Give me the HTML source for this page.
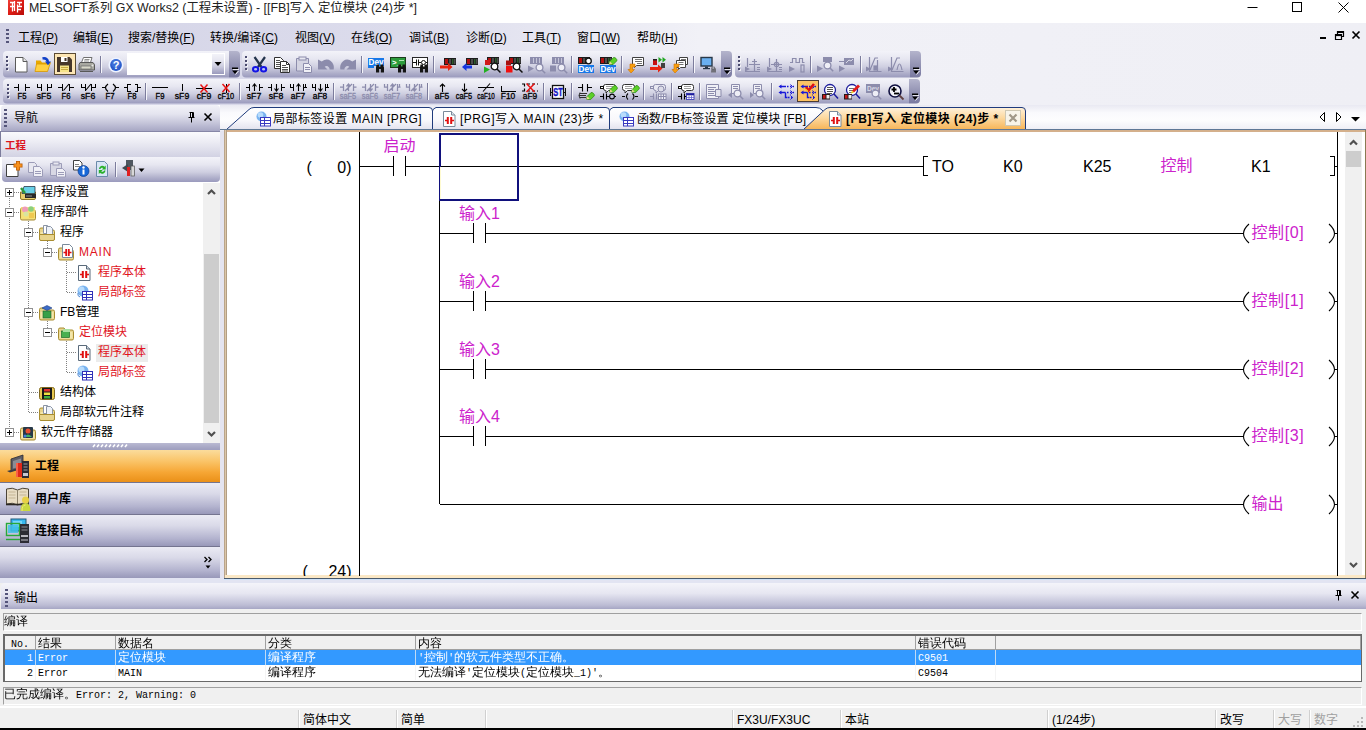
<!DOCTYPE html>
<html lang="zh-CN">
<head>
<meta charset="utf-8">
<title>MELSOFT系列 GX Works2</title>
<style>
*{box-sizing:border-box;margin:0;padding:0}
html,body{width:1366px;height:730px;overflow:hidden;background:#d6d6e8;font-family:"Liberation Sans","Noto Sans CJK SC",sans-serif;font-size:12px;color:#000}
.abs{position:absolute}
#titlebar{position:absolute;left:0;top:0;width:1366px;height:23px;background:#fff}
#titlebar .ttl{position:absolute;left:29px;top:0;height:17px;line-height:17px;font-size:12.400px;color:#222;white-space:nowrap}
#menubar{position:absolute;left:0;top:23px;width:1366px;height:27px;background:linear-gradient(90deg,#d3d3e6 0,#dcdcec 400px,#f1f1f7 700px,#efeff5 1366px)}
#menubar .mi{position:absolute;top:7px;height:16px;line-height:16px;font-size:12px;white-space:nowrap;color:#000}
#menubar .mi u{text-decoration:underline}
.grip{position:absolute;width:3px;background:repeating-linear-gradient(180deg,#55557a 0,#55557a 2px,transparent 2px,transparent 4px)}
#tbarea{position:absolute;left:0;top:50px;width:1366px;height:55px;background:linear-gradient(90deg,#d3d3e6 0,#dcdcec 400px,#f1f1f7 700px,#efeff5 1366px)}
.tb{position:absolute;height:26px;border-radius:4px 0 0 4px;background:linear-gradient(180deg,#ededf5 0,#e2e2ee 35%,#c4c4d8 70%,#a5a5c3 100%)}
.tbend{position:absolute;width:11px;border-radius:0 4px 4px 0;background:linear-gradient(180deg,#b0b0c8 0,#8d8daf 60%,#77779e 100%)}
.sep{position:absolute;width:1px;background:#7f7f9f;box-shadow:1px 0 0 #f4f4fa}

#nav{position:absolute;left:0;top:105px;width:220px;height:473px;background:#fff}
#navhdr{position:absolute;left:1px;top:0;width:219px;height:26px;background:linear-gradient(180deg,#f2f2f8 0,#e4e4ef 35%,#c4c4d9 70%,#a7a7c4 100%);border-radius:4px 4px 0 0}
#navhdr .t{position:absolute;left:13px;top:5px;font-size:12px;line-height:16px}
#navproj{position:absolute;left:0;top:26px;width:220px;height:26px;background:linear-gradient(180deg,#fafafd 0,#ececf4 40%,#d2d2e3 100%);border-top:1px solid #8686a6;border-left:1px solid #7c7c9c}
#navproj .t{position:absolute;left:4px;top:6px;font-size:10.500px;line-height:14px;font-weight:bold;color:#dc141e}
#navtb{position:absolute;left:2px;top:52px;width:218px;height:25px;background:linear-gradient(180deg,#f3f3f9 0,#e7e7f1 30%,#cfcfe1 60%,#adadc9 85%,#9a9abd 100%);border-radius:0 0 4px 4px}
#tree{position:absolute;left:0;top:78px;width:220px;height:260px;background:#fff;overflow:hidden}
.tr{position:absolute;font-size:12px;line-height:16px;white-space:nowrap;color:#000}
.tr.r{color:#e0141e}
.pm{position:absolute;width:9px;height:9px;border:1px solid #919191;background:#fff}
.pm:before{content:"";position:absolute;left:1px;top:3px;width:5px;height:1px;background:#000}
.pm.p:after{content:"";position:absolute;left:3px;top:1px;width:1px;height:5px;background:#000}
.dv{position:absolute;width:1px;background:repeating-linear-gradient(180deg,#808080 0,#808080 1px,transparent 1px,transparent 2px)}
.dh{position:absolute;height:1px;background:repeating-linear-gradient(90deg,#808080 0,#808080 1px,transparent 1px,transparent 2px)}
.nbtn{position:absolute;left:0;width:220px;height:32px;background:linear-gradient(180deg,#ebebf4 0,#d9d9e8 35%,#b4b4cf 75%,#9898b9 100%);border-top:1px solid #74748f}
.nbtn .t{position:absolute;left:35px;top:8px;font-size:12px;line-height:16px;font-weight:bold;color:#000}
.nbtn.sel{height:33px;background:linear-gradient(180deg,#fbdc9c 0,#fac468 35%,#f6a634 70%,#ea9018 100%);border-top:1px solid #a0a0c0}

#tabs{position:absolute;left:220px;top:105px;width:1146px;height:26px;background:linear-gradient(180deg,#e9e9f2 0,#fafafd 30%,#fdfdfe 60%,#ececf4 100%)}
#tabs .tt{position:absolute;top:6px;font-size:12px;line-height:16px;white-space:nowrap;color:#000;letter-spacing:.45px}
#editor{position:absolute;left:224px;top:129px;width:1142px;height:451px;background:#fff}
#out{position:absolute;left:0;top:583px;width:1366px;height:125px;background:#f0f0f0}
#outhdr{position:absolute;left:1px;top:0;width:1365px;height:26px;background:linear-gradient(180deg,#f4f4fa 0,#e6e6f1 40%,#bcbcd4 85%,#a6a6c4 100%);border-radius:4px 0 0 0}
#outhdr .t{position:absolute;left:13px;top:6.500px;font-size:12px;line-height:16px}
.sun{position:absolute;border-top:1px solid #a0a0a0;border-left:1px solid #a0a0a0;border-bottom:1px solid #fff;border-right:1px solid #fff;font-family:"Liberation Mono","WenQuanYi Zen Hei",monospace;font-size:12px;line-height:15px;white-space:pre}
#tbl{position:absolute;left:3px;top:51px;width:1359px;height:48px;border:1px solid #696969;border-top:2px solid #696969;border-left:2px solid #696969;background:#fff;font-family:"Liberation Mono","WenQuanYi Zen Hei",monospace;font-size:12px;line-height:15px}
.l{font-size:10px;letter-spacing:0}
#tbl .row{position:absolute;left:0;width:1356px;height:15px}
#tbl .c{position:absolute;top:0;height:15px;line-height:17px;white-space:pre;overflow:hidden}
#tbl .hd{height:14px}
#tbl .hd .c{height:14px;line-height:16px;border-right:1px solid #a0a0a0;border-bottom:1px solid #a0a0a0;background:#f0f0f0}
#tbl .vs{position:absolute;top:14px;width:1px;height:30px;background:rgba(240,240,240,.75)}
#sb{position:absolute;left:0;top:706px;width:1366px;height:24px;background:#f0f0f0;border-top:2px solid #fff;border-bottom:2px solid #000}
#sb .t{position:absolute;top:5px;font-size:12px;line-height:15px;white-space:nowrap}
#sb .d{position:absolute;top:2px;width:1px;height:18px;background:#d0d0d0;box-shadow:1px 0 0 #fff}
</style>
</head>
<body>
<div id="titlebar">
  <svg class="abs" style="left:8px;top:0" width="16" height="15" viewBox="0 0 16 15"><defs><linearGradient id="ig" x1="0" y1="0" x2="1" y2="1"><stop offset="0" stop-color="#f04038"/><stop offset=".5" stop-color="#dc1c14"/><stop offset="1" stop-color="#b80c08"/></linearGradient></defs><rect width="16" height="15" fill="url(#ig)"/><path d="M2 2.500h5M4.500 2.500v4M2 6.500h4M9 2.500h5M11.500 2.500v3M6.500 1v10M9.500 4.500v8M10 6.500h4M10 9.500h3M4.500 6.500v5" stroke="#fff" stroke-width="1.300" fill="none"/></svg>
  <div class="ttl">MELSOFT系列 GX Works2 (工程未设置) - [[FB]写入 定位模块 (24)步 *]</div>
  <svg class="abs" style="left:1240px;top:0" width="126" height="23" viewBox="0 0 126 23"><path d="M7.500 7.500h10" stroke="#000" stroke-width="1"/><rect x="52.500" y="2.500" width="9" height="9" fill="none" stroke="#000" stroke-width="1"/><path d="M98.500 2.500l10 10M108.500 2.500l-10 10" stroke="#000" stroke-width="1"/></svg>
</div>
<div id="menubar">
  <div class="grip" style="left:6px;top:6px;height:16px"></div>
  <div class="mi" style="left:18px">工程(<u>P</u>)</div>
  <div class="mi" style="left:73px">编辑(<u>E</u>)</div>
  <div class="mi" style="left:128px">搜索/替换(<u>F</u>)</div>
  <div class="mi" style="left:210px">转换/编译(<u>C</u>)</div>
  <div class="mi" style="left:295px">视图(<u>V</u>)</div>
  <div class="mi" style="left:351px">在线(<u>O</u>)</div>
  <div class="mi" style="left:409px">调试(<u>B</u>)</div>
  <div class="mi" style="left:466px">诊断(<u>D</u>)</div>
  <div class="mi" style="left:522px">工具(<u>T</u>)</div>
  <div class="mi" style="left:577px">窗口(<u>W</u>)</div>
  <div class="mi" style="left:637px">帮助(<u>H</u>)</div>
  <svg class="abs" style="left:1316px;top:6px" width="48" height="14" viewBox="0 0 48 14"><rect x="4" y="8" width="6" height="2" fill="#000"/><path d="M21.500 2.500h6v5h-6zM21 3.500h7" stroke="#000" stroke-width="1.200" fill="none"/><path d="M19.500 5.500h6v5h-6z" fill="#f0f0f6" stroke="#000" stroke-width="1.200"/><path d="M19 6.500h7" stroke="#000" stroke-width="1.200"/><path d="M36.500 2.500l7 7M43.500 2.500l-7 7" stroke="#000" stroke-width="1.700"/></svg>
</div>
<div id="tbarea">
<!--TB-->
<svg class="abs" style="left:0;top:0" width="1366" height="55" viewBox="0 50 1366 55" font-family="'Liberation Sans',sans-serif">
<defs><linearGradient id="tb" x1="0" y1="0" x2="0" y2="1"><stop offset="0" stop-color="#f3f3f9"/><stop offset=".3" stop-color="#e7e7f1"/><stop offset=".6" stop-color="#cfcfe1"/><stop offset=".85" stop-color="#adadc9"/><stop offset="1" stop-color="#9a9abd"/></linearGradient><linearGradient id="ec" x1="0" y1="0" x2="0" y2="1"><stop offset="0" stop-color="#b4b4cc"/><stop offset=".5" stop-color="#9494b4"/><stop offset="1" stop-color="#7878a0"/></linearGradient></defs>
<path d="M7 51h222v26.5h-222q-4 0 -4 -4v-18.5q0 -4 4 -4z" fill="url(#tb)"/>
<path d="M229 51h7q4 0 4 4v18.5q0 4 -4 4h-7z" fill="url(#ec)"/><rect x="232" y="67.5" width="6" height="1.500" fill="#000"/><rect x="233" y="69.0" width="6" height="1" fill="#fff" opacity=".8"/><path d="M232 70.5h6l-3 3.500z" fill="#000"/><path d="M238.5 71.0l-3 3.500" stroke="#fff" opacity=".9"/>
<path d="M246 51h475v26.5h-475q-4 0 -4 -4v-18.5q0 -4 4 -4z" fill="url(#tb)"/>
<path d="M721 51h7q4 0 4 4v18.5q0 4 -4 4h-7z" fill="url(#ec)"/><rect x="724" y="67.5" width="6" height="1.500" fill="#000"/><rect x="725" y="69.0" width="6" height="1" fill="#fff" opacity=".8"/><path d="M724 70.5h6l-3 3.500z" fill="#000"/><path d="M730.5 71.0l-3 3.500" stroke="#fff" opacity=".9"/>
<path d="M739 51h171v26.5h-171q-4 0 -4 -4v-18.5q0 -4 4 -4z" fill="url(#tb)"/>
<path d="M910 51h7q4 0 4 4v18.5q0 4 -4 4h-7z" fill="url(#ec)"/><rect x="913" y="67.5" width="6" height="1.500" fill="#000"/><rect x="914" y="69.0" width="6" height="1" fill="#fff" opacity=".8"/><path d="M913 70.5h6l-3 3.500z" fill="#000"/><path d="M919.5 71.0l-3 3.500" stroke="#fff" opacity=".9"/>
<path d="M7 79h902v24.5h-902q-4 0 -4 -4v-16.5q0 -4 4 -4z" fill="url(#tb)"/>
<path d="M909 79h7q4 0 4 4v16.5q0 4 -4 4h-7z" fill="url(#ec)"/><rect x="912" y="93.5" width="6" height="1.500" fill="#000"/><rect x="913" y="95.0" width="6" height="1" fill="#fff" opacity=".8"/><path d="M912 96.5h6l-3 3.500z" fill="#000"/><path d="M918.5 97.0l-3 3.500" stroke="#fff" opacity=".9"/>
<rect x="6" y="56" width="2" height="2" fill="#4a4a6e"/><rect x="7" y="57" width="2" height="2" fill="#fff" opacity=".7"/><rect x="6" y="56" width="2" height="2" fill="#4a4a6e"/><rect x="6" y="60" width="2" height="2" fill="#4a4a6e"/><rect x="7" y="61" width="2" height="2" fill="#fff" opacity=".7"/><rect x="6" y="60" width="2" height="2" fill="#4a4a6e"/><rect x="6" y="64" width="2" height="2" fill="#4a4a6e"/><rect x="7" y="65" width="2" height="2" fill="#fff" opacity=".7"/><rect x="6" y="64" width="2" height="2" fill="#4a4a6e"/><rect x="6" y="68" width="2" height="2" fill="#4a4a6e"/><rect x="7" y="69" width="2" height="2" fill="#fff" opacity=".7"/><rect x="6" y="68" width="2" height="2" fill="#4a4a6e"/>
<rect x="245" y="56" width="2" height="2" fill="#4a4a6e"/><rect x="246" y="57" width="2" height="2" fill="#fff" opacity=".7"/><rect x="245" y="56" width="2" height="2" fill="#4a4a6e"/><rect x="245" y="60" width="2" height="2" fill="#4a4a6e"/><rect x="246" y="61" width="2" height="2" fill="#fff" opacity=".7"/><rect x="245" y="60" width="2" height="2" fill="#4a4a6e"/><rect x="245" y="64" width="2" height="2" fill="#4a4a6e"/><rect x="246" y="65" width="2" height="2" fill="#fff" opacity=".7"/><rect x="245" y="64" width="2" height="2" fill="#4a4a6e"/><rect x="245" y="68" width="2" height="2" fill="#4a4a6e"/><rect x="246" y="69" width="2" height="2" fill="#fff" opacity=".7"/><rect x="245" y="68" width="2" height="2" fill="#4a4a6e"/>
<rect x="738" y="56" width="2" height="2" fill="#4a4a6e"/><rect x="739" y="57" width="2" height="2" fill="#fff" opacity=".7"/><rect x="738" y="56" width="2" height="2" fill="#4a4a6e"/><rect x="738" y="60" width="2" height="2" fill="#4a4a6e"/><rect x="739" y="61" width="2" height="2" fill="#fff" opacity=".7"/><rect x="738" y="60" width="2" height="2" fill="#4a4a6e"/><rect x="738" y="64" width="2" height="2" fill="#4a4a6e"/><rect x="739" y="65" width="2" height="2" fill="#fff" opacity=".7"/><rect x="738" y="64" width="2" height="2" fill="#4a4a6e"/><rect x="738" y="68" width="2" height="2" fill="#4a4a6e"/><rect x="739" y="69" width="2" height="2" fill="#fff" opacity=".7"/><rect x="738" y="68" width="2" height="2" fill="#4a4a6e"/>
<rect x="7" y="84" width="2" height="2" fill="#4a4a6e"/><rect x="8" y="85" width="2" height="2" fill="#fff" opacity=".7"/><rect x="7" y="84" width="2" height="2" fill="#4a4a6e"/><rect x="7" y="88" width="2" height="2" fill="#4a4a6e"/><rect x="8" y="89" width="2" height="2" fill="#fff" opacity=".7"/><rect x="7" y="88" width="2" height="2" fill="#4a4a6e"/><rect x="7" y="92" width="2" height="2" fill="#4a4a6e"/><rect x="8" y="93" width="2" height="2" fill="#fff" opacity=".7"/><rect x="7" y="92" width="2" height="2" fill="#4a4a6e"/><rect x="7" y="96" width="2" height="2" fill="#4a4a6e"/><rect x="8" y="97" width="2" height="2" fill="#fff" opacity=".7"/><rect x="7" y="96" width="2" height="2" fill="#4a4a6e"/>
<rect x="54.500" y="53.500" width="21" height="21" fill="#fde6b4" stroke="#5c4c34"/>
<g transform="translate(15,57)"><path d="M.5 .5h7.500l4 4v10.500h-11.500z" fill="#fff" stroke="#5a5a5a"/><path d="M8 .5v4h4" fill="#e8e8e8" stroke="#5a5a5a"/></g>
<g transform="translate(35,57)"><path d="M1 3.500h4.500l1.500 2h6v3h-12z" fill="#e8a800"/><path d="M0 14.500l1.500-7.500h11l3-1.500l-3 9z" fill="#ffd040" stroke="#d89800" stroke-width=".8"/><path d="M7.500 1.500q4.500-1 5.500 3.500" fill="none" stroke="#1040c8" stroke-width="2.400"/><path d="M10 4.500h6l-3 3.800z" fill="#1040c8"/></g>
<g transform="translate(57,57)"><path d="M0 0h12.500l2.500 2.500v12.500h-15z" fill="#46362a"/><rect x="4" y="0" width="6.500" height="5" fill="#fff"/><rect x="7.500" y="1" width="2" height="3" fill="#46362a"/><rect x="3" y="8.500" width="9" height="6.500" fill="#f6e48a"/><path d="M4 10.500h7M4 12.500h7" stroke="#c8a840"/></g>
<g transform="translate(79,57)"><path d="M4.500 .5h8.500l-1.500 5h-9z" fill="#fff" stroke="#707070"/><path d="M5.500 2.500h5M5 4h5" stroke="#909090"/><path d="M1 5.500h13l1.500 2v5.500h-15.500v-5.500z" fill="#a8a8a0" stroke="#585858"/><rect x="2" y="9" width="10" height="3" fill="#d8d8c8" stroke="#686868" stroke-width=".7"/><path d="M1 14.500h13" stroke="#585858"/><circle cx="13.500" cy="8.500" r="1" fill="#e8e8e8"/></g>
<g transform="translate(108,57)"><circle cx="8" cy="8" r="7.600" fill="#eef3ff"/><circle cx="8" cy="8" r="5.900" fill="#2a5ccc"/><circle cx="8" cy="6.500" r="4.500" fill="#4a7ce0" opacity=".6"/><text x="8" y="12" font-size="11" font-weight="bold" fill="#fff" text-anchor="middle">?</text></g>
<g transform="translate(252,57)"><path d="M2.500 0l7 10M13 0l-7 10" stroke="#24344c" stroke-width="2.200"/><ellipse cx="3.600" cy="12.300" rx="2.600" ry="2.200" fill="#b8c4f8" stroke="#1414e4" stroke-width="2"/><ellipse cx="11.600" cy="12.300" rx="2.600" ry="2.200" fill="#b8c4f8" stroke="#1414e4" stroke-width="2"/></g>
<g transform="translate(274,57)"><path d="M.5 .5h6l3 3v8h-9z" fill="#fff" stroke="#303030"/><path d="M2 3.500h4M2 5.500h5M2 7.500h5M2 9.500h5" stroke="#505050"/><path d="M6.500 4.500h6l3 3v8h-9z" fill="#fff" stroke="#303030"/><path d="M12.500 4.500v3h3" fill="none" stroke="#303030"/><path d="M8 8.500h4M8 10.500h6M8 12.500h6M8 14h6" stroke="#505050"/></g>
<g transform="translate(296,57)"><path d="M.5 1.500h12v12.500h-12z" fill="#d4d4e2" stroke="#8c8cac"/><rect x="3" y="0" width="7" height="3" fill="#e8e8f0" stroke="#8c8cac"/><path d="M7.500 6.500h5l3 3v6h-8z" fill="#f0f0f6" stroke="#8c8cac"/><path d="M9 10.500h5M9 12.500h5" stroke="#8c8cac"/></g>
<g transform="translate(318,57)"><path d="M0 2.500v10h9.500l-2.800-2.800q2.300-1.500 4.300 .8q.8 1 .5 2h4.200q1-5 -3-8.500q-4-3 -9 .5z" fill="#8c8cac"/></g>
<g transform="translate(340,57)"><path d="M16 2.500v10h-9.500l2.800-2.800q-2.300-1.500 -4.300 .8q-.8 1 -.5 2h-4.200q-1-5 3-8.500q4-3 9 .5z" fill="#8c8cac"/></g>
<g transform="translate(368,57)"><rect x="0" y="1" width="16" height="8" fill="#1878e8"/><text x="8" y="8" font-size="9" font-weight="bold" fill="#fff" text-anchor="middle" textLength="15" lengthAdjust="spacingAndGlyphs">Dev</text><rect x="0" y="9" width="6" height="2" fill="#1878e8"/><g transform="translate(7.5,7.5)"><path d="M1 0h2.500v2h1.500v-2h2.500l1 3v5h-3.200v-3.500h-1.600v3.500h-3.200v-5z" fill="#141414"/></g></g>
<g transform="translate(390,57)"><rect x=".5" y=".5" width="15" height="10" fill="#2c9c3c" stroke="#1c3c1c"/><text x="2" y="8" font-size="8" font-weight="bold" fill="#fff">&gt;_</text><path d="M9 3.500h5" stroke="#b0e8b0"/><g transform="translate(7.5,7.5)"><path d="M1 0h2.500v2h1.500v-2h2.500l1 3v5h-3.200v-3.500h-1.600v3.500h-3.200v-5z" fill="#141414"/></g></g>
<g transform="translate(412,57)"><rect x=".5" y=".5" width="15" height="10" fill="#fff" stroke="#282828"/><path d="M1 5.500h3M4.500 2.500v6M6.500 2.500v6M7 5.500h2M14 5.500h1.500" stroke="#101010"/><circle cx="11.500" cy="5.500" r="2" fill="none" stroke="#101010"/><g transform="translate(7.5,7.5)"><path d="M1 0h2.500v2h1.500v-2h2.500l1 3v5h-3.200v-3.500h-1.600v3.500h-3.200v-5z" fill="#141414"/></g></g>
<g transform="translate(440,57)"><g transform="translate(4,1)"><rect x="0" y="0" width="12" height="7" fill="#1c1c1c"/><rect x="1" y="1" width="3" height="5" fill="#b01010"/><rect x="5" y="1" width="2" height="5" fill="#4c4c4c"/><rect x="8" y="1" width="1.500" height="5" fill="#2c5c2c"/><rect x="10" y="1" width="1.500" height="5" fill="#4c4c4c"/></g><path d="M0 8.500h8v-2.500l4.500 4l-4.500 4v-2.500h-8z" fill="#e82410"/></g>
<g transform="translate(462,57)"><g transform="translate(4,1)"><rect x="0" y="0" width="12" height="7" fill="#1c1c1c"/><rect x="1" y="1" width="3" height="5" fill="#b01010"/><rect x="5" y="1" width="2" height="5" fill="#4c4c4c"/><rect x="8" y="1" width="1.500" height="5" fill="#2c5c2c"/><rect x="10" y="1" width="1.500" height="5" fill="#4c4c4c"/></g><path d="M10 8.500h-5.500v-2.500l-4.500 4l4.500 4v-2.500h5.500z" fill="#1434e0"/></g>
<g transform="translate(484,57)"><g transform="translate(3,0)"><rect x="0" y="0" width="12" height="7" fill="#1c1c1c"/><rect x="1" y="1" width="3" height="5" fill="#b01010"/><rect x="5" y="1" width="2" height="5" fill="#4c4c4c"/><rect x="8" y="1" width="1.500" height="5" fill="#2c5c2c"/><rect x="10" y="1" width="1.500" height="5" fill="#4c4c4c"/></g><g transform="translate(1,3)"><rect x="0" y="0" width="5" height="5" fill="#d01818"/></g><path d="M0 9.500l6 3l-6 3.500z" fill="#20b020"/><g transform="translate(6,5)"><circle cx="4.500" cy="4.500" r="3.300" fill="#fff" stroke="#101010" stroke-width="1.300"/><path d="M7 7l3.500 3.500" stroke="#101010" stroke-width="1.500"/></g></g>
<g transform="translate(506,57)"><g transform="translate(3,0)"><rect x="0" y="0" width="12" height="7" fill="#1c1c1c"/><rect x="1" y="1" width="3" height="5" fill="#b01010"/><rect x="5" y="1" width="2" height="5" fill="#4c4c4c"/><rect x="8" y="1" width="1.500" height="5" fill="#2c5c2c"/><rect x="10" y="1" width="1.500" height="5" fill="#4c4c4c"/></g><rect x="0" y="3.500" width="5" height="5" fill="#a81010"/><rect x="0" y="9" width="6.500" height="6.500" fill="#f01010"/><g transform="translate(6,5)"><circle cx="4.500" cy="4.500" r="3.300" fill="#fff" stroke="#101010" stroke-width="1.300"/><path d="M7 7l3.500 3.500" stroke="#101010" stroke-width="1.500"/></g></g>
<g transform="translate(528,57)"><g transform="translate(2,0)"><rect x="0" y="0" width="12" height="7" fill="#8c8cac"/><path d="M3.500 1v5M6.500 1v5M9.500 1v5" stroke="#c4c4d8"/></g><path d="M0 8.500l6 3l-6 3.500z" fill="#8c8cac"/><g transform="translate(7,6)"><circle cx="4.500" cy="4.500" r="3.400" fill="#eeeef6" stroke="#8c8cac" stroke-width="1.300"/><path d="M7.200 7.200l3 3" stroke="#8c8cac" stroke-width="1.500"/></g></g>
<g transform="translate(550,57)"><g transform="translate(2,0)"><rect x="0" y="0" width="12" height="7" fill="#8c8cac"/><path d="M3.500 1v5M6.500 1v5M9.500 1v5" stroke="#c4c4d8"/></g><rect x="0" y="8.500" width="6" height="6" fill="#8c8cac"/><g transform="translate(7,6)"><circle cx="4.500" cy="4.500" r="3.400" fill="#eeeef6" stroke="#8c8cac" stroke-width="1.300"/><path d="M7.200 7.200l3 3" stroke="#8c8cac" stroke-width="1.500"/></g></g>
<g transform="translate(578,57)"><g transform="translate(0,0)"><rect x="0" y="0" width="12" height="7" fill="#1c1c1c"/><rect x="1" y="1" width="3" height="5" fill="#b01010"/><rect x="5" y="1" width="2" height="5" fill="#4c4c4c"/><rect x="8" y="1" width="1.500" height="5" fill="#2c5c2c"/><rect x="10" y="1" width="1.500" height="5" fill="#4c4c4c"/></g><circle cx="10.500" cy="4" r="2.800" fill="#fff" stroke="#101010" stroke-width="1.300"/><rect x="0" y="8" width="16" height="8" fill="#1878e8"/><text x="8" y="15" font-size="9" font-weight="bold" fill="#fff" text-anchor="middle" textLength="15" lengthAdjust="spacingAndGlyphs">Dev</text></g>
<g transform="translate(600,57)"><g transform="translate(0,0)"><rect x="0" y="0" width="12" height="7" fill="#1c1c1c"/><rect x="1" y="1" width="3" height="5" fill="#b01010"/><rect x="5" y="1" width="2" height="5" fill="#4c4c4c"/><rect x="8" y="1" width="1.500" height="5" fill="#2c5c2c"/><rect x="10" y="1" width="1.500" height="5" fill="#4c4c4c"/></g><rect x="0" y="8" width="16" height="8" fill="#1878e8"/><text x="8" y="15" font-size="9" font-weight="bold" fill="#fff" text-anchor="middle" textLength="15" lengthAdjust="spacingAndGlyphs">Dev</text><g transform="translate(8,0)"><g transform="translate(1,1) scale(.82)"><path d="M0 7.500l1-3.500l4.500-4.500q1.500-.5 3 1q1.500 1.500 1 3l-4.500 4.500z" fill="#5cd028" stroke="#2a8410" stroke-width=".9"/><path d="M0 7.500l1-3.500l3 3z" fill="#e8d890"/></g></g></g>
<g transform="translate(628,57)"><g transform="translate(4,0)"><path d="M.5 .5h11v8h-7l-2 2v-2h-2z" fill="#fff" stroke="#404040"/><path d="M3 2.500h7M3 4.500h7M5 6.500h5" stroke="#707070"/></g><path d="M2 7h5v3h-2.500v2.500h2l-3.500 3.500l-3-3.500h2z" fill="#f8a010" stroke="#d07000" stroke-width=".6"/></g>
<g transform="translate(650,57)"><rect x="3" y="3" width="4" height="5" fill="#c81010"/><rect x="3" y="2" width="4" height="1.500" fill="#202020"/><path d="M0 10h8v-2.500l4.500 4l-4.500 4v-2.500h-8z" fill="#e82410"/><rect x="11" y="6" width="4" height="5" fill="#404040"/><path d="M8.500 0l3.500 2.700l-3.500 2.700zM12.500 0l3.500 2.700l-3.500 2.700z" fill="#20a820"/></g>
<g transform="translate(672,57)"><g transform="translate(7,0)"><path d="M.5 .5h8v7h-8z" fill="#fff" stroke="#404040"/><path d="M2 2.500h5M2 4.500h5" stroke="#707070"/></g><g transform="translate(4,3)"><path d="M.5 .5h9v7h-5l-2 2v-2h-2z" fill="#fff" stroke="#404040"/><path d="M2.500 2.500h5M2.500 4.500h5" stroke="#707070"/></g><path d="M2 7h5v3h-2.500v2.500h2l-3.500 3.500l-3-3.500h2z" fill="#f8a010" stroke="#d07000" stroke-width=".6"/></g>
<g transform="translate(700,57)"><rect x="1" y=".5" width="11" height="8.500" fill="#6ab0f0" stroke="#283848" stroke-width="1.400"/><rect x="5" y="9.500" width="3" height="1.500" fill="#283848"/><rect x="3" y="11" width="7" height="1.200" fill="#283848"/><path d="M11.500 10.500h3.500l1 1.500v3.500h-5z" fill="#707078"/><rect x="12" y="10" width="2.500" height="2" fill="#c0c0c8" stroke="#505058" stroke-width=".6"/></g>
<g transform="translate(745,57)"><g stroke="#8c8cac" fill="none" stroke-width="1.200"><path d="M2.500 1v9M0 14.500h15M4 7.500h11M9.500 2v12M7 4.500h5M12 10.500h3M12 12.500h3"/><path d="M0 9.500l5 2.500l-5 2.500z" fill="#8c8cac" stroke="none"/></g></g>
<g transform="translate(767,57)"><g stroke="#8c8cac" fill="none" stroke-width="1.200"><path d="M2.500 1v9M0 14.500h15M4 7.500h11M9.500 2v12M12 10.500h3M12 12.500h3"/><circle cx="9.500" cy="7.500" r="2.200"/><path d="M0 9.500l5 2.500l-5 2.500z" fill="#8c8cac" stroke="none"/></g></g>
<g transform="translate(789,57)"><g stroke="#8c8cac" fill="none" stroke-width="1.200"><path d="M1 5.500h2.500v-4h3.500v4h3.500v-4h3v4h2"/><rect x="12" y="8" width="3" height="7"/><path d="M0 9l6 3l-6 3z" fill="#8c8cac" stroke="none"/></g></g>
<g transform="translate(817,57)"><path d="M6 0h9v5h-9z" fill="#8c8cac"/><path d="M0 8.500l6 3l-6 3.500z" fill="#8c8cac"/><g transform="translate(6,4)"><circle cx="4.500" cy="4.500" r="3.400" fill="#eeeef6" stroke="#8c8cac" stroke-width="1.300"/><path d="M7.200 7.200l3 3" stroke="#8c8cac" stroke-width="1.500"/></g></g>
<g transform="translate(839,57)"><rect x="5" y="1" width="10" height="7" fill="#8c8cac"/><path d="M7 6l3-3l2 1l2-2" stroke="#d8d8e6" fill="none"/><path d="M0 4.500h5" stroke="#8c8cac"/><path d="M0 8.500l6 3l-6 3.500z" fill="#8c8cac"/></g>
<g transform="translate(866,57)"><g stroke="#8c8cac" fill="none" stroke-width="1.200"><path d="M3.500 0v14.500h12M4 13l5-12h3M11.500 3v11"/><rect x="8" y="9" width="2.500" height="4" fill="#8c8cac"/><path d="M0 9.500l5 2.500l-5 2.500z" fill="#8c8cac" stroke="none"/></g></g>
<g transform="translate(888,57)"><g stroke="#8c8cac" fill="none" stroke-width="1.200"><path d="M3.500 0v14.500h12M4 13l5-12h3M9 13q2.500-12 5 0"/><path d="M0 9.500l5 2.500l-5 2.500z" fill="#8c8cac" stroke="none"/></g></g>
<path d="M100.500 56v17" stroke="#7c7c9c"/><path d="M101.500 56v17" stroke="#f6f6fb"/>
<path d="M361.500 56v17" stroke="#7c7c9c"/><path d="M362.500 56v17" stroke="#f6f6fb"/>
<path d="M433.500 56v17" stroke="#7c7c9c"/><path d="M434.500 56v17" stroke="#f6f6fb"/>
<path d="M571.500 56v17" stroke="#7c7c9c"/><path d="M572.500 56v17" stroke="#f6f6fb"/>
<path d="M621.500 56v17" stroke="#7c7c9c"/><path d="M622.500 56v17" stroke="#f6f6fb"/>
<path d="M693.500 56v17" stroke="#7c7c9c"/><path d="M694.500 56v17" stroke="#f6f6fb"/>
<path d="M810.500 56v17" stroke="#7c7c9c"/><path d="M811.500 56v17" stroke="#f6f6fb"/>
<path d="M860.500 56v17" stroke="#7c7c9c"/><path d="M861.500 56v17" stroke="#f6f6fb"/>
<rect x="127" y="53" width="98" height="22" fill="#fff"/><rect x="212" y="54" width="12" height="20" fill="url(#tb)"/><path d="M214.500 62h7l-3.500 4z" fill="#000"/>
<rect x="797.500" y="80.500" width="21" height="21" fill="#fcc264" stroke="#4c3c34"/>
<g transform="translate(14,83.5)"><g stroke="#000" stroke-width="1.1" fill="none"><path d="M0 3.500h4.500M4.500 .5v7M11.500 .5v7M11.500 3.500h4.500" shape-rendering="crispEdges" stroke-width="1"/></g><text x="8" y="15.500" font-size="8.500" fill="#000" stroke="#000" stroke-width=".3" text-anchor="middle" textLength="9" lengthAdjust="spacingAndGlyphs">F5</text></g>
<g transform="translate(36,83.5)"><g stroke="#000" stroke-width="1.1" fill="none"><path d="M1.500 .5v3h4M5.500 .5v7M11.500 .5v7M11.500 3.500h4M15.500 .5v3" shape-rendering="crispEdges" stroke-width="1"/></g><text x="8" y="15.500" font-size="8.500" fill="#000" stroke="#000" stroke-width=".3" text-anchor="middle" textLength="14.5" lengthAdjust="spacingAndGlyphs">sF5</text></g>
<g transform="translate(58,83.5)"><g stroke="#000" stroke-width="1.1" fill="none"><path d="M0 3.500h4.500M4.500 .5v7M11.500 .5v7M11.500 3.500h4.500" shape-rendering="crispEdges" stroke-width="1"/><path d="M5.500 7l5.500-6.500"/></g><text x="8" y="15.500" font-size="8.500" fill="#000" stroke="#000" stroke-width=".3" text-anchor="middle" textLength="9" lengthAdjust="spacingAndGlyphs">F6</text></g>
<g transform="translate(80,83.5)"><g stroke="#000" stroke-width="1.1" fill="none"><path d="M1.500 .5v3h4M5.500 .5v7M11.500 .5v7M11.500 3.500h4M15.500 .5v3" shape-rendering="crispEdges" stroke-width="1"/><path d="M5.500 7l5.500-6.500"/></g><text x="8" y="15.500" font-size="8.500" fill="#000" stroke="#000" stroke-width=".3" text-anchor="middle" textLength="14.5" lengthAdjust="spacingAndGlyphs">sF6</text></g>
<g transform="translate(102,83.5)"><g stroke="#000" stroke-width="1.2" fill="none"><path d="M0 4h3.500M13.500 4h3" shape-rendering="crispEdges" stroke-width="1"/><path d="M6 .5q-5 3.750 0 7.500M11 .5q5 3.750 0 7.500"/></g><text x="8" y="15.500" font-size="8.500" fill="#000" stroke="#000" stroke-width=".3" text-anchor="middle" textLength="9" lengthAdjust="spacingAndGlyphs">F7</text></g>
<g transform="translate(124,83.5)"><g stroke="#000" stroke-width="1.1" fill="none"><path d="M0 4h3.500M6.500 .5h-3v7h3M10.500 .5h3v7h-3M13.500 4h3" shape-rendering="crispEdges" stroke-width="1"/></g><text x="8" y="15.500" font-size="8.500" fill="#000" stroke="#000" stroke-width=".3" text-anchor="middle" textLength="9" lengthAdjust="spacingAndGlyphs">F8</text></g>
<g transform="translate(152,83.5)"><g stroke="#000" stroke-width="1.1" fill="none"><path d="M0 3.500h16" shape-rendering="crispEdges" stroke-width="1"/></g><text x="8" y="15.500" font-size="8.500" fill="#000" stroke="#000" stroke-width=".3" text-anchor="middle" textLength="9" lengthAdjust="spacingAndGlyphs">F9</text></g>
<g transform="translate(174,83.5)"><g stroke="#000" stroke-width="1.1" fill="none"><path d="M8.500 0v7" shape-rendering="crispEdges" stroke-width="1"/></g><text x="8" y="15.500" font-size="8.500" fill="#000" stroke="#000" stroke-width=".3" text-anchor="middle" textLength="14.5" lengthAdjust="spacingAndGlyphs">sF9</text></g>
<g transform="translate(196,83.5)"><g stroke="#000" stroke-width="1.1" fill="none"><path d="M0 5h16" shape-rendering="crispEdges" stroke-width="1"/></g><g stroke="#e81414" stroke-width="1.5" fill="none"><path d="M4.500 1l7 8M11.500 1l-7 8"/></g><text x="8" y="15.500" font-size="8.500" fill="#000" stroke="#000" stroke-width=".3" text-anchor="middle" textLength="14.5" lengthAdjust="spacingAndGlyphs">cF9</text></g>
<g transform="translate(218,83.5)"><g stroke="#000" stroke-width="1.1" fill="none"><path d="M8.500 0v9" shape-rendering="crispEdges" stroke-width="1"/></g><g stroke="#e81414" stroke-width="1.5" fill="none"><path d="M4.500 .5l7 8M11.500 .5l-7 8"/></g><text x="8" y="15.500" font-size="8.500" fill="#000" stroke="#000" stroke-width=".3" text-anchor="middle" textLength="16.5" lengthAdjust="spacingAndGlyphs">cF10</text></g>
<g transform="translate(246,83.5)"><g stroke="#000" stroke-width="1.1" fill="none"><path d="M0 3.500h3.500M3.500 .5v7M13.500 .5v7M13.500 3.500h3" shape-rendering="crispEdges" stroke-width="1"/><path d="M8.500 .5v7M6.500 3l2-2.500l2 2.500"/></g><text x="8" y="15.500" font-size="8.500" fill="#000" stroke="#000" stroke-width=".3" text-anchor="middle" textLength="14.5" lengthAdjust="spacingAndGlyphs">sF7</text></g>
<g transform="translate(268,83.5)"><g stroke="#000" stroke-width="1.1" fill="none"><path d="M0 3.500h3.500M3.500 .5v7M13.500 .5v7M13.500 3.500h3" shape-rendering="crispEdges" stroke-width="1"/><path d="M8.500 .5v7M6.500 5l2 2.500l2-2.500"/></g><text x="8" y="15.500" font-size="8.500" fill="#000" stroke="#000" stroke-width=".3" text-anchor="middle" textLength="14.5" lengthAdjust="spacingAndGlyphs">sF8</text></g>
<g transform="translate(290,83.5)"><g stroke="#000" stroke-width="1.1" fill="none"><path d="M.5 .5v3h3M3.500 .5v7M13.500 .5v7M13.500 3.500h3M15.500 .5v3" shape-rendering="crispEdges" stroke-width="1"/><path d="M8.500 .5v7M6.500 3l2-2.500l2 2.500"/></g><text x="8" y="15.500" font-size="8.500" fill="#000" stroke="#000" stroke-width=".3" text-anchor="middle" textLength="14.5" lengthAdjust="spacingAndGlyphs">aF7</text></g>
<g transform="translate(312,83.5)"><g stroke="#000" stroke-width="1.1" fill="none"><path d="M.5 .5v3h3M3.500 .5v7M13.500 .5v7M13.500 3.500h3M15.500 .5v3" shape-rendering="crispEdges" stroke-width="1"/><path d="M8.500 .5v7M6.500 5l2 2.500l2-2.500"/></g><text x="8" y="15.500" font-size="8.500" fill="#000" stroke="#000" stroke-width=".3" text-anchor="middle" textLength="14.5" lengthAdjust="spacingAndGlyphs">aF8</text></g>
<g transform="translate(340,83.5)"><g stroke="#8c8cac" stroke-width="1.25" fill="none"><path d="M0 3.500h3.500M3.500 .5v7M13.500 .5v7M13.500 3.500h3M8.500 .5v7M6.500 3l2-2.500l2 2.500M5 7.500l7-7"/></g><text x="8" y="15.500" font-size="8.500" fill="#8c8cac" stroke="#8c8cac" stroke-width=".3" text-anchor="middle" textLength="16.5" lengthAdjust="spacingAndGlyphs">saF5</text></g>
<g transform="translate(362,83.5)"><g stroke="#8c8cac" stroke-width="1.25" fill="none"><path d="M0 3.500h3.500M3.500 .5v7M13.500 .5v7M13.500 3.500h3M8.500 .5v7M6.500 5l2 2.500l2-2.500M5 7.500l7-7"/></g><text x="8" y="15.500" font-size="8.500" fill="#8c8cac" stroke="#8c8cac" stroke-width=".3" text-anchor="middle" textLength="16.5" lengthAdjust="spacingAndGlyphs">saF6</text></g>
<g transform="translate(384,83.5)"><g stroke="#8c8cac" stroke-width="1.25" fill="none"><path d="M.5 .5v3h3M3.500 .5v7M13.500 .5v7M13.500 3.500h3M15.500 .5v3M8.500 .5v7M6.500 3l2-2.500l2 2.500M5 7.500l7-7"/></g><text x="8" y="15.500" font-size="8.500" fill="#8c8cac" stroke="#8c8cac" stroke-width=".3" text-anchor="middle" textLength="16.5" lengthAdjust="spacingAndGlyphs">saF7</text></g>
<g transform="translate(406,83.5)"><g stroke="#8c8cac" stroke-width="1.25" fill="none"><path d="M.5 .5v3h3M3.500 .5v7M13.500 .5v7M13.500 3.500h3M15.500 .5v3M8.500 .5v7M6.500 5l2 2.500l2-2.500M5 7.500l7-7"/></g><text x="8" y="15.500" font-size="8.500" fill="#8c8cac" stroke="#8c8cac" stroke-width=".3" text-anchor="middle" textLength="16.5" lengthAdjust="spacingAndGlyphs">saF8</text></g>
<g transform="translate(434,83.5)"><g stroke="#000" stroke-width="1.1" fill="none"><path d="M8.500 .5v8M6 3l2.500-2.500l2.500 2.500"/></g><text x="8" y="15.500" font-size="8.500" fill="#000" stroke="#000" stroke-width=".3" text-anchor="middle" textLength="14.5" lengthAdjust="spacingAndGlyphs">aF5</text></g>
<g transform="translate(456,83.5)"><g stroke="#000" stroke-width="1.1" fill="none"><path d="M8.500 0v8M6 5.500l2.500 2.500l2.500-2.500"/></g><text x="8" y="15.500" font-size="8.500" fill="#000" stroke="#000" stroke-width=".3" text-anchor="middle" textLength="16.5" lengthAdjust="spacingAndGlyphs">caF5</text></g>
<g transform="translate(478,83.5)"><g stroke="#000" stroke-width="1.1" fill="none"><path d="M0 4h16" shape-rendering="crispEdges" stroke-width="1"/><path d="M5 8l7-8"/></g><text x="8" y="15.500" font-size="8.500" fill="#000" stroke="#000" stroke-width=".3" text-anchor="middle" textLength="17.5" lengthAdjust="spacingAndGlyphs">caF10</text></g>
<g transform="translate(500,83.5)"><g stroke="#000" stroke-width="1.1" fill="none"><path d="M1.500 2v5.500h14" shape-rendering="crispEdges" stroke-width="1"/></g><text x="8" y="15.500" font-size="8.500" fill="#000" stroke="#000" stroke-width=".3" text-anchor="middle" textLength="14.5" lengthAdjust="spacingAndGlyphs">F10</text></g>
<g transform="translate(522,83.5)"><g stroke="#000" stroke-width="1.2" fill="none"><path d="M0 .5h16M0 7.500h16M2.500 0v8" stroke-dasharray="3 2"/></g><g stroke="#e81414" stroke-width="1.5" fill="none"><path d="M4.500 0l8 8.500M12.500 0l-8 8.500"/></g><text x="8" y="15.500" font-size="8.500" fill="#000" stroke="#000" stroke-width=".3" text-anchor="middle" textLength="14.5" lengthAdjust="spacingAndGlyphs">aF9</text></g>
<g transform="translate(550,84)"><path d="M.5 4v8M15.500 4v8M.5 8.500h2M13.500 8.500h2" stroke="#101010" fill="none"/><rect x="2.500" y="1.500" width="11" height="13" fill="#fff" stroke="#101010" stroke-width="1.300"/><text x="8" y="12" font-size="10" font-weight="bold" fill="#1414c4" stroke="#1414c4" stroke-width=".4" text-anchor="middle" textLength="9.500" lengthAdjust="spacingAndGlyphs">ST</text></g>
<g transform="translate(578,84)"><g stroke="#000" stroke-width="1.1" fill="none"><path d="M0 3.500h4M4.500 0v7.500M9.500 0v7.500M10 3.500h4"/></g><path d="M2 9.500h7M1 11.500h7M2 13.500h6" stroke="#303030"/><path d="M2 8.500q-2 3 0 6" stroke="#303030" fill="none"/><g transform="translate(7.5,8)"><g transform="translate(1,1) scale(.82)"><path d="M0 7.500l1-3.500l4.500-4.500q1.500-.5 3 1q1.500 1.500 1 3l-4.500 4.500z" fill="#5cd028" stroke="#2a8410" stroke-width=".9"/><path d="M0 7.500l1-3.500l3 3z" fill="#e8d890"/></g></g></g>
<g transform="translate(600,84)"><g transform="translate(3,0)"><path d="M2.500 .5h8q2 0 2 2v2q0 2 -2 2h-5l-2.500 2.500v-2.500h-.5q-2 0 -2 -2v-2q0 -2 2 -2z" fill="#fff" stroke="#303030"/><path d="M3 2.500h7M3 4.500h7" stroke="#a0a0a0"/></g><rect x=".5" y="2.500" width="3" height="2" fill="#fff" stroke="#101010"/><g stroke="#000" stroke-width="1.1" fill="none"><path d="M0 12.500h3M3.500 9.500v6M6.500 9.500v6M7 12.500h2.500M14.500 12.500h1.500"/><circle cx="12" cy="12.500" r="2.400"/></g><g transform="translate(8.5,1)"><g transform="translate(1,1) scale(.82)"><path d="M0 7.500l1-3.500l4.500-4.500q1.500-.5 3 1q1.500 1.500 1 3l-4.500 4.500z" fill="#5cd028" stroke="#2a8410" stroke-width=".9"/><path d="M0 7.500l1-3.500l3 3z" fill="#e8d890"/></g></g></g>
<g transform="translate(622,84)"><g transform="translate(0,0)"><path d="M2.500 .5h8q2 0 2 2v2q0 2 -2 2h-5l-2.500 2.500v-2.500h-.5q-2 0 -2 -2v-2q0 -2 2 -2z" fill="#fff" stroke="#303030"/><path d="M3 2.500h7M3 4.500h7" stroke="#a0a0a0"/></g><g stroke="#000" stroke-width="1.1" fill="none"><path d="M0 12.500h3M6 9.500q-3 3 0 6M10.500 9.500q3 3 0 6M13 12.500h3"/></g><g transform="translate(8.5,1)"><g transform="translate(1,1) scale(.82)"><path d="M0 7.500l1-3.500l4.500-4.500q1.500-.5 3 1q1.500 1.500 1 3l-4.500 4.500z" fill="#5cd028" stroke="#2a8410" stroke-width=".9"/><path d="M0 7.500l1-3.500l3 3z" fill="#e8d890"/></g></g></g>
<g transform="translate(650,84)"><g transform="translate(3,0)"><path d="M2.500 .5h8q2 0 2 2v2q0 2 -2 2h-5l-2.500 2.500v-2.500h-.5q-2 0 -2 -2v-2q0 -2 2 -2z" fill="#e8e8f2" stroke="#8c8cac"/></g><rect x=".5" y="2.500" width="3" height="2" fill="#e8e8f2" stroke="#8c8cac"/><g stroke="#8c8cac" stroke-width="1.1" fill="none"><path d="M0 12.500h3M3.500 9.500v6M6.500 9.500v6"/></g><rect x="8.500" y="10" width="7.500" height="5.500" fill="#f0f0f8" stroke="#8c8cac"/><path d="M8.500 12.500h7.500M11 10v5.500M13.500 10v5.500" stroke="#8c8cac"/><circle cx="11" cy="5" r="3" fill="#dcdce8" stroke="#8c8cac"/></g>
<g transform="translate(678,84)"><g transform="translate(3,0)"><path d="M2.500 .5h8q2 0 2 2v2q0 2 -2 2h-5l-2.500 2.500v-2.500h-.5q-2 0 -2 -2v-2q0 -2 2 -2z" fill="#fff" stroke="#303030"/><path d="M3 2.500h7M3 4.500h7" stroke="#a0a0a0"/></g><rect x=".5" y="2.500" width="3" height="2" fill="#fff" stroke="#101010"/><g stroke="#000" stroke-width="1.1" fill="none"><path d="M0 12.500h3M3.500 9.500v6M6.500 9.500v6M7 12.500h1.500"/></g><rect x="8.500" y="9.500" width="7.500" height="6" fill="#fff" stroke="#2c2cb0" stroke-width=".8"/><rect x="8.500" y="9.500" width="7.500" height="1.800" fill="#1c1c9c"/><path d="M8.500 13.500h7.500M11 11.500v4M13.500 11.500v4" stroke="#5858c8" stroke-width=".7"/></g>
<g transform="translate(706,84)"><path d="M.5 .5h12v14h-12z" fill="#f0f0f6" stroke="#8c8cac"/><path d="M2 3.500h8M2 5.500h6M2 7.500h8M2 9.500h6M2 11.500h8" stroke="#8c8cac"/><path d="M9.500 5.500h5.500v7h-5.500z" fill="#e4e4ee" stroke="#8c8cac"/></g>
<g transform="translate(728,84)"><path d="M3.500 .5h8v9h-8z" fill="#f0f0f6" stroke="#8c8cac"/><path d="M5 2.500h5M5 4.500h5" stroke="#8c8cac"/><path d="M0 11l4-3v6z" fill="#8c8cac"/><g transform="translate(5,5)"><circle cx="4.500" cy="4.500" r="3.400" fill="#eeeef6" stroke="#8c8cac" stroke-width="1.300"/><path d="M7.200 7.200l3 3" stroke="#8c8cac" stroke-width="1.500"/></g></g>
<g transform="translate(750,84)"><path d="M3.500 .5h8v9h-8z" fill="#f0f0f6" stroke="#8c8cac"/><path d="M5 2.500h5M5 4.500h5" stroke="#8c8cac"/><path d="M0 8l4 3l-4 3z" fill="#8c8cac"/><g transform="translate(5,5)"><circle cx="4.500" cy="4.500" r="3.400" fill="#eeeef6" stroke="#8c8cac" stroke-width="1.300"/><path d="M7.200 7.200l3 3" stroke="#8c8cac" stroke-width="1.500"/></g></g>
<g transform="translate(778,84)"><g stroke="#1818d8" stroke-width="1.1" fill="none"><path d="M2 2.500h6M2 8.500h5.500M7.500 8.500v5h2" stroke-width="1.400"/><path d="M3.500 .5l-3 2l3 2zM3.500 6.500l-3 2l3 2z" fill="#1818d8" stroke="none"/><path d="M9 2.500h7M9 8.500h7M10 13.500h6" stroke-dasharray="1.500 1.500" stroke-width="1.400"/><path d="M12.500 .5l2 2l-2 2M12.500 6.500l2 2l-2 2M12.500 11.500l2 2l-2 2" stroke-width="1"/></g></g>
<g transform="translate(800,84)"><g stroke="#1818d8" stroke-width="1.1" fill="none"><path d="M2 2.500h6M2 8.500h5.500M7.500 8.500v5h2" stroke-width="1.400"/><path d="M3.500 .5l-3 2l3 2zM3.500 6.500l-3 2l3 2z" fill="#1818d8" stroke="none"/><path d="M9 2.500h7M9 8.500h7M10 13.500h6" stroke-dasharray="1.500 1.500" stroke-width="1.400"/><path d="M12.500 .5l2 2l-2 2M12.500 6.500l2 2l-2 2M12.500 11.500l2 2l-2 2" stroke-width="1"/></g><path d="M6 3l2.500 3.500l5.500-6.500" stroke="#e01010" stroke-width="2.600" fill="none"/><path d="M5.500 5l2.500 2.500" stroke="#f8d020" stroke-width="1.200"/></g>
<g transform="translate(822,84)"><circle cx="8" cy="6" r="5.500" fill="#fff" stroke="#1c1c9c" stroke-width="1.300"/><path d="M5 3.500h6M5 5.500h6M5 7.500h6M5 9.500h5" stroke="#505050"/><path d="M12 10l4 4.500" stroke="#1c1c9c" stroke-width="1.500"/><rect x="0" y="10" width="8" height="5.500" fill="#281818"/><rect x="1" y="11" width="2.500" height="3.500" fill="#c81818"/><rect x="4.500" y="11" width="3" height="3.500" fill="#f0f0f0"/></g>
<g transform="translate(844,84)"><circle cx="8" cy="6" r="5.500" fill="#fff" stroke="#1c1c9c" stroke-width="1.300"/><path d="M5 4.500h5M5 6.500h5M5 8.500h4" stroke="#707070"/><path d="M12 10l4 4.500" stroke="#1c1c9c" stroke-width="1.500"/><rect x="0" y="10" width="8" height="5.500" fill="#281818"/><rect x="1" y="11" width="2.500" height="3.500" fill="#c81818"/><rect x="4.500" y="11" width="3" height="3.500" fill="#f0f0f0"/><path d="M8 6.500l6-6l2 2l-6 6z" fill="#e01818"/><path d="M8 6.500l-1 3l3-1z" fill="#f0d020"/></g>
<g transform="translate(866,84)"><rect x="0" y="0" width="14" height="9" fill="#8c8cac"/><text x="7" y="7" font-size="8" font-weight="bold" fill="#d8d8e6" text-anchor="middle" textLength="12" lengthAdjust="spacingAndGlyphs">Dev</text><g transform="translate(5,5)"><circle cx="4.500" cy="4.500" r="3.400" fill="#eeeef6" stroke="#8c8cac" stroke-width="1.300"/><path d="M7.200 7.200l3 3" stroke="#8c8cac" stroke-width="1.500"/></g></g>
<g transform="translate(888,84)"><circle cx="7" cy="7" r="6" fill="#f4f4fa" stroke="#101040" stroke-width="1.600"/><path d="M3.500 5.500h5M6 3v5" stroke="#000" stroke-width="1.800"/><path d="M6 9.500h5" stroke="#000" stroke-width="1.800"/><path d="M11.500 11.500l4 4" stroke="#604040" stroke-width="1.800"/></g>
<path d="M145.500 83v17" stroke="#7c7c9c"/><path d="M146.500 83v17" stroke="#f6f6fb"/>
<path d="M239.500 83v17" stroke="#7c7c9c"/><path d="M240.500 83v17" stroke="#f6f6fb"/>
<path d="M333.500 83v17" stroke="#7c7c9c"/><path d="M334.500 83v17" stroke="#f6f6fb"/>
<path d="M427.500 83v17" stroke="#7c7c9c"/><path d="M428.500 83v17" stroke="#f6f6fb"/>
<path d="M543.500 83v17" stroke="#7c7c9c"/><path d="M544.500 83v17" stroke="#f6f6fb"/>
<path d="M571.500 83v17" stroke="#7c7c9c"/><path d="M572.500 83v17" stroke="#f6f6fb"/>
<path d="M643.500 83v17" stroke="#7c7c9c"/><path d="M644.500 83v17" stroke="#f6f6fb"/>
<path d="M671.500 83v17" stroke="#7c7c9c"/><path d="M672.500 83v17" stroke="#f6f6fb"/>
<path d="M699.500 83v17" stroke="#7c7c9c"/><path d="M700.500 83v17" stroke="#f6f6fb"/>
<path d="M771.500 83v17" stroke="#7c7c9c"/><path d="M772.500 83v17" stroke="#f6f6fb"/>
</svg>
<!--/TB-->
</div>
<div class="abs" style="left:220px;top:105px;width:5px;height:478px;background:#e4e4f0"></div>
<div class="abs" style="left:0;top:578px;width:1366px;height:5px;background:#e2e4f2"></div>
<div id="nav">
  <div id="navhdr"><div class="grip" style="left:3px;top:4px;height:18px"></div><div class="t">导航</div>
    <svg class="abs" style="left:185px;top:6px" width="30" height="14" viewBox="0 0 30 14"><path d="M3.500 1.500h4M4.500 1.500v5M7.500 1.500v5M6.500 1.500v5M2.500 6.500h6M5.500 6.500v5" stroke="#000" stroke-width="1" fill="none"/><path d="M18.500 2.500l7 7M25.500 2.500l-7 7" stroke="#000" stroke-width="1.600"/></svg>
  </div>
  <div id="navproj"><div class="t">工程</div></div>
  <!--NAV-->
<div id="navtb"><svg class="abs" style="left:-2px;top:0" width="220" height="25" viewBox="0 157 220 25">
<g transform="translate(6,161)"><path d="M.5 3.500h11.500v12h-11.500z" fill="#fff" stroke="#404040"/><path d="M12 0v9.500M7.500 4.500h9" stroke="#b85c08" stroke-width="4"/><path d="M12 .8v8M8.300 4.500h7.400" stroke="#f8901c" stroke-width="2.600"/></g>
<g transform="translate(28,162)"><path d="M.5 .5h6l2 2v8h-8z" fill="#e8e8f0" stroke="#9c9cb8"/><path d="M5.500 4.500h6l3 3v7h-9z" fill="#f0f0f6" stroke="#9c9cb8"/><path d="M7 9.500h6M7 11.500h6" stroke="#9c9cb8"/></g>
<g transform="translate(50,162)"><path d="M.5 1.500h11v12h-11z" fill="#d8d8e4" stroke="#9c9cb8"/><rect x="3" y="0" width="6" height="3" fill="#e8e8f0" stroke="#9c9cb8"/><path d="M6.500 6.500h6l3 3v5.500h-9z" fill="#f0f0f6" stroke="#9c9cb8"/><path d="M8 10.500h6M8 12.500h6" stroke="#9c9cb8"/></g>
<g transform="translate(73,160)"><path d="M.5 .5h6l2.500 2.500v7h-8.500z" fill="#fff" stroke="#404040"/><path d="M2 4.500h4M2 6.500h5" stroke="#808080"/><circle cx="10.500" cy="11" r="5.500" fill="#1868d8"/><circle cx="10.500" cy="11" r="5.500" fill="none" stroke="#0c3c90" stroke-width=".7"/><rect x="9.500" y="9.500" width="2" height="5" fill="#fff"/><circle cx="10.500" cy="7.500" r="1.200" fill="#fff"/></g>
<g transform="translate(96,161)"><path d="M.5 .5h8l3 3v12h-11z" fill="#d8e6f6" stroke="#6a8aaa"/><path d="M3 8a3.200 3.200 0 0 1 5.500-2.200l1.200-1.200v3.800h-3.800l1.300-1.300a1.800 1.800 0 0 0 -2.800 .9zM9.500 9.500a3.200 3.200 0 0 1 -5.500 2.200l-1.200 1.200v-3.800h3.800l-1.300 1.300a1.800 1.800 0 0 0 2.800 -.9z" fill="#28b028"/></g>
<path d="M115.500 162v15" stroke="#7c7c9c"/><path d="M116.500 162v15" stroke="#f6f6fb"/>
<g transform="translate(122,160)"><path d="M4 0h7v10h-7z" fill="#505860"/><path d="M0 8l6-4v8z" fill="#404850"/><rect x="5" y="7" width="3" height="9" fill="#e02020"/><rect x="9" y="6" width="3.500" height="10" fill="#d8d8d8" stroke="#505050" stroke-width=".7"/><path d="M16.500 8.500h6l-3 3.500z" fill="#000"/></g>
</svg></div>
<div id="tree">
<div class="dv" style="left:9px;top:15px;height:230px"></div>
<div class="dv" style="left:28px;top:38px;height:192px"></div>
<div class="dv" style="left:47px;top:58px;height:8px"></div>
<div class="dv" style="left:47px;top:138px;height:8px"></div>
<div class="dv" style="left:66px;top:78px;height:32px"></div>
<div class="dv" style="left:66px;top:158px;height:32px"></div>
<div class="abs" style="left:96px;top:161px;width:52px;height:18px;background:#ececec"></div>
<div class="dh" style="left:14px;top:9px;width:6px"></div>
<div class="pm p" style="left:5px;top:5px"></div>
<div class="tr" style="left:41px;top:1px">程序设置</div>
<div class="dh" style="left:14px;top:29px;width:6px"></div>
<div class="pm" style="left:5px;top:25px"></div>
<div class="tr" style="left:41px;top:21px">程序部件</div>
<div class="dh" style="left:33px;top:49px;width:6px"></div>
<div class="pm" style="left:24px;top:45px"></div>
<div class="tr" style="left:60px;top:41px">程序</div>
<div class="dh" style="left:52px;top:69px;width:6px"></div>
<div class="pm" style="left:43px;top:65px"></div>
<div class="tr r" style="left:79px;top:61px;letter-spacing:.8px">MAIN</div>
<div class="dh" style="left:67px;top:89px;width:10px"></div>
<div class="tr r" style="left:98px;top:81px">程序本体</div>
<div class="dh" style="left:67px;top:109px;width:10px"></div>
<div class="tr r" style="left:98px;top:101px">局部标签</div>
<div class="dh" style="left:33px;top:129px;width:6px"></div>
<div class="pm" style="left:24px;top:125px"></div>
<div class="tr" style="left:60px;top:121px">FB管理</div>
<div class="dh" style="left:52px;top:149px;width:6px"></div>
<div class="pm" style="left:43px;top:145px"></div>
<div class="tr r" style="left:79px;top:141px">定位模块</div>
<div class="dh" style="left:67px;top:169px;width:10px"></div>
<div class="tr r" style="left:98px;top:161px">程序本体</div>
<div class="dh" style="left:67px;top:189px;width:10px"></div>
<div class="tr r" style="left:98px;top:181px">局部标签</div>
<div class="dh" style="left:29px;top:209px;width:10px"></div>
<div class="tr" style="left:60px;top:201px">结构体</div>
<div class="dh" style="left:29px;top:229px;width:10px"></div>
<div class="tr" style="left:60px;top:221px">局部软元件注释</div>
<div class="dh" style="left:14px;top:249px;width:6px"></div>
<div class="pm p" style="left:5px;top:245px"></div>
<div class="tr" style="left:41px;top:241px">软元件存储器</div>
<svg class="abs" style="left:0;top:0" width="200" height="260" viewBox="0 0 200 260"><g transform="translate(20,2)"><path d="M.5 7h15v6q0 1.500 -1.500 1.500h-12q-1.500 0 -1.500 -1.500z" fill="#e8d070" stroke="#907828"/><path d="M4 1.500h11v7h-13z" fill="#68d0e8" stroke="#283848" stroke-width=".8"/><path d="M1 3l4 5" stroke="#2c9c3c" stroke-width="2.400"/><rect x="5" y="9" width="11" height="4" fill="#282828"/><path d="M6 11h6" stroke="#909090"/></g><g transform="translate(20,22)"><path d="M.5 4.500q0-1.500 1.500-1.500h4l1.500 2h6.500q1.500 0 1.500 1.500v7q0 1.500 -1.500 1.500h-12q-1.500 0 -1.500 -1.500z" fill="#e8d48c" stroke="#a88c30"/><path d="M1.500 7h13v6.500h-13z" fill="#f8eeb8" opacity=".7"/><rect x="1" y="2" width="14" height="12" fill="#f4e06c" opacity=".8"/><circle cx="5" cy="4.500" r="3" fill="#f09cb8"/><circle cx="11" cy="4" r="2.800" fill="#8cd07c"/><circle cx="6" cy="9" r="2.500" fill="#d8e4a0"/><rect x="9" y="8" width="5" height="5" fill="#f0c850"/></g><g transform="translate(39,42)"><path d="M.5 4.500q0-1.500 1.500-1.500h4l1.500 2h6.500q1.500 0 1.500 1.500v7q0 1.500 -1.500 1.500h-12q-1.500 0 -1.500 -1.500z" fill="#e8d48c" stroke="#a88c30"/><path d="M1.500 7h13v6.500h-13z" fill="#f8eeb8" opacity=".7"/><path d="M4.500 .5h4l2 2v6h-6z" fill="#fff" stroke="#8a94a4"/><path d="M7.500 1.500h4l2 2v6h-6z" fill="#eef2f8" stroke="#8a94a4"/><path d="M.5 9.500h15v4.500q0 1.500 -1.500 1.500h-12q-1.500 0 -1.500 -1.500z" fill="#e8d48c" stroke="#a88c30"/></g><g transform="translate(58,62)"><path d="M.5 4.500q0-1.500 1.500-1.500h4l1.500 2h6.500q1.500 0 1.500 1.500v7q0 1.500 -1.500 1.500h-12q-1.500 0 -1.500 -1.500z" fill="#e8d48c" stroke="#a88c30"/><path d="M1.500 7h13v6.500h-13z" fill="#f8eeb8" opacity=".7"/><g transform="translate(3,-1)"><path d="M1.500 .5h7l3 3v10h-10z" fill="#fff" stroke="#7a8a9a"/><path d="M2.500 8.500h2.500M8 8.500h2.500" stroke="#e01010" stroke-width="1.400"/><path d="M5.200 5v7M7.800 5v7" stroke="#e01010" stroke-width="1.800"/></g></g><g transform="translate(77,82)"><path d="M1.500 .5h8l3.500 3.500v11.500h-11.500z" fill="#fff" stroke="#5a6a7a"/><path d="M9.500 .5v3.500h3.500" fill="#cdd6e0" stroke="#5a6a7a"/><path d="M3 9.500h2.500M9.500 9.500h2.500" stroke="#e01010" stroke-width="1.400"/><path d="M5.800 6v7M9.200 6v7" stroke="#e01010" stroke-width="2"/></g><g transform="translate(77,102)"><circle cx="6" cy="6" r="5.500" fill="#7ab4f0"/><circle cx="4.500" cy="4.500" r="3" fill="#b8dcfc"/><path d="M1 8q-1 3 2 4" stroke="#4a84d0" fill="none"/><rect x="5.500" y="6.500" width="10" height="8.500" fill="#fff" stroke="#3030b8"/><path d="M5.500 9.500h10M5.500 12.500h10M9.500 6.500v8.500" stroke="#3030b8"/></g><g transform="translate(39,122)"><path d="M.5 4.500q0-1.500 1.500-1.500h4l1.500 2h6.500q1.500 0 1.500 1.500v7q0 1.500 -1.500 1.500h-12q-1.500 0 -1.500 -1.500z" fill="#e8d48c" stroke="#a88c30"/><path d="M1.500 7h13v6.500h-13z" fill="#f8eeb8" opacity=".7"/><path d="M3 3l5-2.500l5 2.500l-5 2.500z" fill="#3c6cc8" stroke="#1c3c80" stroke-width=".6"/><rect x="4" y="6" width="8" height="7" fill="#38a048" stroke="#1c6028" stroke-width=".6"/></g><g transform="translate(58,142)"><path d="M.5 4.500q0-1.500 1.500-1.500h4l1.500 2h6.500q1.500 0 1.500 1.500v7q0 1.500 -1.500 1.500h-12q-1.500 0 -1.500 -1.500z" fill="#e8d48c" stroke="#a88c30"/><path d="M1.500 7h13v6.500h-13z" fill="#f8eeb8" opacity=".7"/><rect x="3.500" y="6" width="8" height="6.500" fill="#48b050" stroke="#1c6c28" stroke-width=".7"/><rect x="5" y="4" width="7" height="3" fill="#a8e0a0"/></g><g transform="translate(77,162)"><path d="M1.500 .5h8l3.500 3.500v11.500h-11.500z" fill="#fff" stroke="#5a6a7a"/><path d="M9.500 .5v3.500h3.500" fill="#cdd6e0" stroke="#5a6a7a"/><path d="M3 9.500h2.500M9.500 9.500h2.500" stroke="#e01010" stroke-width="1.400"/><path d="M5.800 6v7M9.200 6v7" stroke="#e01010" stroke-width="2"/></g><g transform="translate(77,182)"><circle cx="6" cy="6" r="5.500" fill="#7ab4f0"/><circle cx="4.500" cy="4.500" r="3" fill="#b8dcfc"/><path d="M1 8q-1 3 2 4" stroke="#4a84d0" fill="none"/><rect x="5.500" y="6.500" width="10" height="8.500" fill="#fff" stroke="#3030b8"/><path d="M5.500 9.500h10M5.500 12.500h10M9.500 6.500v8.500" stroke="#3030b8"/></g><g transform="translate(39,202)"><rect x=".5" y="2.500" width="15" height="12" rx="2" fill="#e8c850" stroke="#806820"/><rect x="3" y="3" width="10" height="11" fill="#181818"/><rect x="5" y="4" width="6" height="2.500" fill="#e03030"/><rect x="5" y="7.500" width="6" height="2.500" fill="#f0e040"/><rect x="5" y="11" width="6" height="2.500" fill="#40b040"/></g><g transform="translate(39,222)"><path d="M.5 4.500q0-1.500 1.500-1.500h4l1.500 2h6.500q1.500 0 1.500 1.500v7q0 1.500 -1.500 1.500h-12q-1.500 0 -1.500 -1.500z" fill="#e8d48c" stroke="#a88c30"/><path d="M1.500 7h13v6.500h-13z" fill="#f8eeb8" opacity=".7"/><path d="M4.500 .5h4l2 2v6h-6z" fill="#fff" stroke="#8a94a4"/><path d="M7.500 1.500h4l2 2v6h-6z" fill="#eef2f8" stroke="#8a94a4"/><path d="M.5 9.500h15v4.500q0 1.500 -1.500 1.500h-12q-1.500 0 -1.500 -1.500z" fill="#e8d48c" stroke="#a88c30"/></g><g transform="translate(20,242)"><path d="M.5 4.500q0-1.500 1.500-1.500h4l1.500 2h6.500q1.500 0 1.500 1.500v7q0 1.500 -1.500 1.500h-12q-1.500 0 -1.500 -1.500z" fill="#e8d48c" stroke="#a88c30"/><path d="M1.500 7h13v6.500h-13z" fill="#f8eeb8" opacity=".7"/><rect x="3" y="2" width="10" height="11" rx="1" fill="#283848"/><circle cx="8" cy="6" r="2.500" fill="#e85030"/><path d="M4 12q4-5 8 0z" fill="#40b060"/><circle cx="5" cy="11" r="1.500" fill="#4080e0"/></g></svg>
<div class="abs" style="left:203px;top:0;width:17px;height:260px;background:#f0f0f0"></div>
<div class="abs" style="left:204px;top:71px;width:15px;height:169px;background:#cdcdcd"></div>
<svg class="abs" style="left:203px;top:0" width="17" height="260" viewBox="0 0 17 260"><path d="M5 11l3.500-3.500l3.500 3.500M5 249l3.500 3.500l3.500-3.500" stroke="#505050" stroke-width="2.200" fill="none"/></svg>
</div>
<!--/NAV-->
  <div class="abs" style="left:0;top:338px;width:220px;height:7px;background:linear-gradient(180deg,#b9b9d2,#9d9dbd)"></div>
  <svg class="abs" style="left:92px;top:339px" width="36" height="4" viewBox="0 0 36 4"><path d="M1 3l2-2.500M5 3l2-2.500M9 3l2-2.500M13 3l2-2.500M17 3l2-2.500M21 3l2-2.500M25 3l2-2.500M29 3l2-2.500M33 3l2-2.500" stroke="#fff" stroke-width="1.600"/></svg>
  <div class="nbtn sel" style="top:344px"><div class="t">工程</div>
   <svg class="abs" style="left:6px;top:4px" width="26" height="26" viewBox="0 0 26 26"><path d="M5 5l12-4v13l-12 3z" fill="#5c5c64" stroke="#2c2c34" stroke-width=".8"/><path d="M7 7l8-2.500v8l-8 2z" fill="#8c8c94"/><path d="M1 17l8-2l3 1l-8 2.500z" fill="#3c3c44"/><rect x="10" y="9" width="6" height="14" fill="#e02818"/><rect x="10" y="9" width="2" height="14" fill="#f86048"/><rect x="16" y="7" width="7" height="17" fill="#2c2c34"/><path d="M17.500 10h4M17.500 13h4M17.500 16h4" stroke="#9c9ca4"/><rect x="17" y="19" width="5" height="3" fill="#c8c8d0"/></svg></div>
  <div class="nbtn" style="top:377px"><div class="t">用户库</div>
   <svg class="abs" style="left:5px;top:3px" width="27" height="27" viewBox="0 0 27 27"><path d="M1.500 3q6-2 11 1q5-3 11-1v15q-6-2 -11 1q-5-3 -11-1z" fill="#e8dcc4" stroke="#4c4438" stroke-width="1"/><path d="M12.500 4v15" stroke="#8c8068"/><path d="M3.500 6h7M3.500 9h7M3.500 12h7M14.500 6h7M14.500 9h7" stroke="#c4b494"/><path d="M1 18.500h23" stroke="#2c2824" stroke-width="1.600"/><circle cx="20.500" cy="14" r="3.500" fill="#e8d048"/><path d="M15.500 25q0-8 5-8q5 0 5 8z" fill="#c8d840"/><path d="M17 25q0-6 3.500-6" stroke="#f0e878" fill="none"/></svg></div>
  <div class="nbtn" style="top:409px"><div class="t">连接目标</div>
   <svg class="abs" style="left:5px;top:3px" width="27" height="27" viewBox="0 0 27 27"><rect x="6" y="1" width="15" height="12" fill="#38b8f0" stroke="#205878" stroke-width="1"/><rect x="8" y="3" width="9" height="6" fill="#90e0ff" opacity=".7"/><rect x="1.500" y="5.500" width="13" height="12" fill="none" stroke="#28a838" stroke-width="1.400"/><rect x="3" y="7" width="10" height="8" fill="#40c0e8" opacity=".85"/><path d="M1 21.500h14" stroke="#28a838" stroke-width="1.400"/><rect x="15" y="6" width="9" height="19" fill="#2c2c34"/><path d="M16.500 9h6M16.500 12h6" stroke="#8c8c94"/><rect x="16" y="17" width="7" height="2" fill="#b8b8c0"/><rect x="16" y="21" width="7" height="2" fill="#787880"/></svg></div>
  <div class="nbtn" style="top:441px"><svg class="abs" style="left:203px;top:9px" width="10" height="14" viewBox="0 0 10 14"><path d="M1.500 1l2.500 2.500l-2.500 2.500M5.500 1l2.500 2.500l-2.500 2.500" stroke="#000" stroke-width="1.300" fill="none"/><path d="M2.500 9.500h5l-2.500 3z" fill="#000"/></svg></div>
</div>

<div id="tabs">
 <svg class="abs" style="left:0;top:0" width="1146" height="26" viewBox="0 0 1146 26">
  <defs>
   <linearGradient id="tg" x1="0" y1="0" x2="0" y2="1"><stop offset="0" stop-color="#ffffff"/><stop offset=".6" stop-color="#f7f7fb"/><stop offset="1" stop-color="#e2e2ee"/></linearGradient>
   <linearGradient id="ta" x1="0" y1="0" x2="0" y2="1"><stop offset="0" stop-color="#fff2dc"/><stop offset=".45" stop-color="#fdd9a0"/><stop offset="1" stop-color="#f7b354"/></linearGradient>
  </defs>
  <path d="M6.500 24.500L29 4.500Q31 2.500 34 2.500H209Q212.500 2.500 212.500 6V24.500Z" fill="url(#tg)" stroke="#1f3b7c" stroke-width="1"/>
  <path d="M212.500 24.500V6Q212.500 4 216 2.500H386Q389.500 2.500 389.500 6V24.500Z" fill="url(#tg)" stroke="#1f3b7c" stroke-width="1"/>
  <path d="M389.500 24.500V6Q389.500 4 393 2.500H596Q600 2.500 602 5L606 9V24.500Z" fill="url(#tg)" stroke="#1f3b7c" stroke-width="1"/>
  <rect x="0" y="24" width="1146" height="1" fill="#5f7896"/>
  <path d="M583 25L605 4.500Q607 2.500 610 2.500H802Q805.500 2.500 805.500 6V25Z" fill="url(#ta)"/>
  <path d="M583 25L605 4.500Q607 2.500 610 2.500H802Q805.500 2.500 805.500 6V24.500" fill="none" stroke="#1f3b7c" stroke-width="1"/>
  <g transform="translate(36,6)"><circle cx="5.500" cy="5.500" r="5" fill="#7ab4f0"/><circle cx="4.500" cy="4" r="2.800" fill="#b8dcfc"/><rect x="4.500" y="6.500" width="10" height="8.500" fill="#fff" stroke="#3838c0"/><path d="M4.500 9.500h10M4.500 12.500h10M8.500 6.500v8.500" stroke="#3838c0"/></g><g transform="translate(223,6)"><path d="M.5 .5h8l3.500 3.500v11.500h-11.500z" fill="#fff" stroke="#7a8a9a"/><path d="M8.500 .5v3.500h3.500" fill="#dde4ec" stroke="#7a8a9a"/><path d="M2 9.500h2.500M8.500 9.500h2.500" stroke="#e01010" stroke-width="1.400"/><path d="M4.800 6v7M8.200 6v7" stroke="#e01010" stroke-width="2"/></g><g transform="translate(399,6)"><circle cx="5.500" cy="5.500" r="5" fill="#7ab4f0"/><circle cx="4.500" cy="4" r="2.800" fill="#b8dcfc"/><rect x="4.500" y="6.500" width="10" height="8.500" fill="#fff" stroke="#3838c0"/><path d="M4.500 9.500h10M4.500 12.500h10M8.500 6.500v8.500" stroke="#3838c0"/></g><g transform="translate(609,6)"><path d="M.5 .5h8l3.500 3.500v11.500h-11.500z" fill="#fff" stroke="#7a8a9a"/><path d="M8.500 .5v3.500h3.500" fill="#dde4ec" stroke="#7a8a9a"/><path d="M2 9.500h2.500M8.500 9.500h2.500" stroke="#e01010" stroke-width="1.400"/><path d="M4.800 6v7M8.200 6v7" stroke="#e01010" stroke-width="2"/></g>
 </svg>
 <div class="tt" style="left:53px">局部标签设置 MAIN [PRG]</div>
 <div class="tt" style="left:240px">[PRG]写入 MAIN (23)步 *</div>
 <div class="tt" style="left:417px;letter-spacing:.1px">函数/FB标签设置 定位模块 [FB]</div>
 <div class="tt" style="left:626px;font-weight:bold">[FB]写入 定位模块 (24)步 *</div>
 <svg class="abs" style="left:785px;top:5px" width="16" height="16" viewBox="0 0 16 16"><rect x=".5" y=".5" width="15" height="15" fill="#f8f4ea" stroke="#cfc8b4"/><path d="M4.500 4.500l7 7M11.500 4.500l-7 7" stroke="#a09888" stroke-width="2.200"/></svg>
 <svg class="abs" style="left:1098px;top:6px" width="46" height="12" viewBox="0 0 46 12"><path d="M6.500 1.500v9l-4.500-4.500z" fill="#fff" stroke="#000"/><path d="M18.500 1.500v9l4.500-4.500z" fill="#fff" stroke="#000"/><path d="M33 6h9l-4.500 4.500z" fill="#000"/></svg>
</div>
<div id="editor">
 <div class="abs" style="left:0;top:0;width:1142px;height:1px;background:#5f7896"></div>
 <div class="abs" style="left:0;top:1px;width:1142px;height:2px;background:#d4b08c"></div>
 <div class="abs" style="left:0;top:1px;width:3px;height:448px;background:linear-gradient(90deg,#a8947c,#dcc6a8 50%,#9c8a74)"></div>
 <div class="abs" style="left:1141px;top:1px;width:1px;height:448px;background:#8a7a52"></div>
 <div class="abs" style="left:1px;top:446px;width:1140px;height:3px;background:#fbe8c6"></div>
 <div class="abs" style="left:0;top:449px;width:1142px;height:1px;background:#4a5a6c"></div>
 <div class="abs" style="left:0;top:450px;width:1142px;height:1px;background:#cfe3fa"></div>
<!--LADDER-->
<svg class="abs" style="left:3px;top:3px" width="1137" height="444" viewBox="227 132 1137 444" shape-rendering="crispEdges">
<g stroke="#000" stroke-width="1" fill="none">
<path d="M359.500 132V576M1337.500 132V576"/>
<path d="M360 166.500H393M406 166.500H923M393.500 156V176M405.500 156V176"/>
<path d="M928 156.500H923.500V175.500H928M1330 156.500H1334.500V175.500H1330M1335 166.500H1337"/>
<path d="M439.500 200V504"/>
<path d="M440 233.500H473M486 233.500H1243M473.500 223V243M485.500 223V243"/>
<path d="M440 301.500H473M486 301.500H1243M473.500 291V311M485.500 291V311"/>
<path d="M440 369.500H473M486 369.500H1243M473.500 359V379M485.500 359V379"/>
<path d="M440 436.500H473M486 436.500H1243M473.500 426V446M485.500 426V446"/>
<path d="M440 504.500H1243"/>
</g>
<g stroke="#000" stroke-width="1.100" fill="none" shape-rendering="auto">
<path d="M1249 224Q1243.500 229 1243.500 233.5Q1243.500 238 1249 243M1329 224Q1334.500 229 1334.500 233.5Q1334.500 238 1329 243M1334.500 233.5H1337"/>
<path d="M1249 292Q1243.500 297 1243.500 301.5Q1243.500 306 1249 311M1329 292Q1334.500 297 1334.500 301.5Q1334.500 306 1329 311M1334.500 301.5H1337"/>
<path d="M1249 360Q1243.500 365 1243.500 369.5Q1243.500 374 1249 379M1329 360Q1334.500 365 1334.500 369.5Q1334.500 374 1329 379M1334.500 369.5H1337"/>
<path d="M1249 427Q1243.500 432 1243.500 436.5Q1243.500 441 1249 446M1329 427Q1334.500 432 1334.500 436.5Q1334.500 441 1329 446M1334.500 436.5H1337"/>
<path d="M1249 495Q1243.500 500 1243.500 504.5Q1243.500 509 1249 514M1329 495Q1334.500 500 1334.500 504.5Q1334.500 509 1329 514M1334.500 504.5H1337"/>
</g>
<rect x="440" y="134" width="78" height="66" fill="none" stroke="#10107c" stroke-width="2"/>
<path d="M440.500 167V199" stroke="#fffbd0" stroke-width="1"/>
<g font-family="'Liberation Sans','Noto Sans CJK SC',sans-serif" font-size="16" fill="#000" shape-rendering="auto">
<text x="306.500" y="172.500">(</text><text x="351.500" y="172.500" text-anchor="end">0)</text>
<text x="302.500" y="576.500">(</text><text x="351.500" y="576.500" text-anchor="end">24)</text>
<text x="932" y="172">TO</text><text x="1003" y="172">K0</text><text x="1083" y="172">K25</text><text x="1251" y="172">K1</text>
<g fill="#cc22cc" font-weight="400">
<text x="399.500" y="151" text-anchor="middle">启动</text>
<text x="1160.500" y="171">控制</text>
<text x="479.500" y="219" text-anchor="middle">输入1</text>
<text x="1251.500" y="237.8" letter-spacing=".6">控制[0]</text>
<text x="479.500" y="287" text-anchor="middle">输入2</text>
<text x="1251.500" y="305.8" letter-spacing=".6">控制[1]</text>
<text x="479.500" y="355" text-anchor="middle">输入3</text>
<text x="1251.500" y="373.8" letter-spacing=".6">控制[2]</text>
<text x="479.500" y="422" text-anchor="middle">输入4</text>
<text x="1251.500" y="440.8" letter-spacing=".6">控制[3]</text>
<text x="1251.500" y="508.800">输出</text>
</g></g>
</svg>
<div class="abs" style="left:1121px;top:3px;width:17px;height:443px;background:#f0f0f0"></div>
<div class="abs" style="left:1122px;top:22px;width:15px;height:16px;background:#cdcdcd"></div>
<svg class="abs" style="left:1121px;top:3px" width="17" height="444" viewBox="0 0 17 444"><path d="M5 12.500l3.500-3.500l3.500 3.500M5 431l3.500 3.500l3.500-3.500" stroke="#505050" stroke-width="2.200" fill="none"/></svg>
<!--/LADDER-->
</div>
<div id="out">
 <div id="outhdr"><div class="grip" style="left:4px;top:6px;height:18px"></div><div class="t">输出</div>
  <svg class="abs" style="left:1332px;top:6px" width="30" height="14" viewBox="0 0 30 14"><path d="M3.500 1.500h4M4.500 1.500v5M7.500 1.500v5M6.500 1.500v5M2.500 6.500h6M5.500 6.500v5" stroke="#000" stroke-width="1" fill="none"/><path d="M18.500 2.500l7 7M25.500 2.500l-7 7" stroke="#000" stroke-width="1.600"/></svg>
 </div>
 <div class="sun" style="left:3px;top:30px;width:1359px;height:18px;padding-top:1px">编译</div>
 <div id="tbl">
  <div class="row hd" style="top:0"><div class="c" style="left:0;width:31px;text-align:center"><span class="l">No.</span></div><div class="c" style="left:31px;width:80px;padding-left:2px">结果</div><div class="c" style="left:111px;width:150px;padding-left:2px">数据名</div><div class="c" style="left:261px;width:150px;padding-left:2px">分类</div><div class="c" style="left:411px;width:500px;padding-left:2px">内容</div><div class="c" style="left:911px;width:80px;padding-left:2px">错误代码</div><div class="c" style="left:991px;width:365px"></div></div>
  <div class="row" style="top:14px;background:#3399ff;color:#fff"><div class="c" style="left:0;width:31px;text-align:right;padding-right:3px"><span class="l">1</span></div><div class="c" style="left:33px"><span class="l">Error</span></div><div class="c" style="left:113px">定位模块</div><div class="c" style="left:263px">编译程序</div><div class="c" style="left:413px"><span class="l">'</span>控制<span class="l">'</span>的软元件类型不正确。</div><div class="c" style="left:913px"><span class="l">C9501</span></div></div>
  <div class="row" style="top:29px"><div class="c" style="left:0;width:31px;text-align:right;padding-right:3px"><span class="l">2</span></div><div class="c" style="left:33px"><span class="l">Error</span></div><div class="c" style="left:113px"><span class="l">MAIN</span></div><div class="c" style="left:263px">编译程序</div><div class="c" style="left:413px">无法编译<span class="l">'</span>定位模块<span class="l">(</span>定位模块<span class="l">_1)'</span>。</div><div class="c" style="left:913px"><span class="l">C9504</span></div></div>
  <div class="vs" style="left:30px"></div><div class="vs" style="left:110px"></div><div class="vs" style="left:260px"></div><div class="vs" style="left:410px"></div><div class="vs" style="left:910px"></div><div class="vs" style="left:990px"></div>
 </div>
 <div class="sun" style="left:3px;top:104px;width:1359px;height:18px">已完成编译。<span class="l">Error: 2, Warning: 0</span></div>
</div>
<div id="sb">
 <div class="d" style="left:298px"></div><div class="t" style="left:303px">简体中文</div>
 <div class="d" style="left:396px"></div><div class="t" style="left:401px">简单</div>
 <div class="d" style="left:485px"></div>
 <div class="d" style="left:732px"></div><div class="t" style="left:737px">FX3U/FX3UC</div>
 <div class="d" style="left:840px"></div><div class="t" style="left:845px">本站</div>
 <div class="d" style="left:1047px"></div><div class="t" style="left:1052px">(1/24步)</div>
 <div class="d" style="left:1215px"></div><div class="t" style="left:1220px">改写</div>
 <div class="d" style="left:1273px"></div><div class="t" style="left:1278px;color:#a0a0a0">大写</div>
 <div class="d" style="left:1309px"></div><div class="t" style="left:1314px;color:#a0a0a0">数字</div>
<svg class="abs" style="left:1352px;top:8px" width="12" height="12" viewBox="0 0 12 12"><path d="M9 1h2v2h-2zM5 5h2v2h-2zM9 5h2v2h-2zM1 9h2v2h-2zM5 9h2v2h-2zM9 9h2v2h-2z" fill="#b8b8b8"/></svg>
</div>
</body>
</html>
